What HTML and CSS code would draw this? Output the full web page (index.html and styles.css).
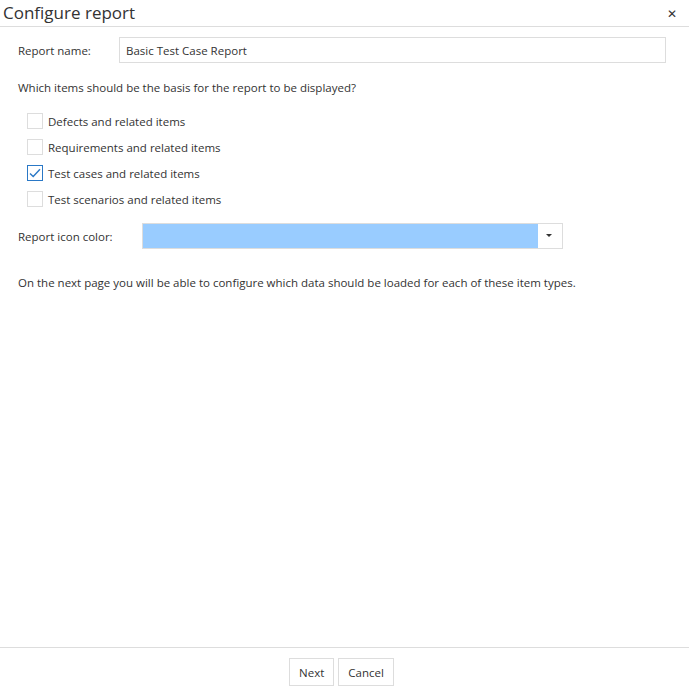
FILE: index.html
```html
<!DOCTYPE html>
<html lang="en">
<head>
    <meta charset="UTF-8">
    <title>Configure report</title>
    <link rel="stylesheet" href="styles.css">
</head>
<body>
    <div class="dialog">
        <div class="header">
            <h1 class="title">Configure report</h1>
            <span class="close">&#10005;</span>
        </div>

        <div class="content">
            <div class="name-row">
                <label class="label">Report name:</label>
                <input type="text" class="text-input" value="Basic Test Case Report">
            </div>

            <p class="question">Which items should be the basis for the report to be displayed?</p>

            <ul class="options">
                <li class="option"><span class="box"></span>Defects and related items</li>
                <li class="option"><span class="box"></span>Requirements and related items</li>
                <li class="option"><span class="box checked">
                    <svg width="12" height="10" viewBox="0 0 12 10"><path d="M1 5.5 L4.2 8.5 L11 1.2" fill="none" stroke="#2a78c6" stroke-width="1.4"/></svg>
                </span>Test cases and related items</li>
                <li class="option"><span class="box"></span>Test scenarios and related items</li>
            </ul>

            <div class="color-row">
                <label class="label">Report icon color:</label>
                <div class="color-select">
                    <span class="swatch"></span>
                    <span class="caret"></span>
                </div>
            </div>

            <p class="hint">On the next page you will be able to configure which data should be loaded for each of these item types.</p>
        </div>

        <div class="footer">
            <button class="btn">Next</button>
            <button class="btn">Cancel</button>
        </div>
    </div>
</body>
</html>
```

FILE: styles.css
```css
body, html {
    margin: 0;
    padding: 0;
    height: 100%;
    font-family: "Open Sans", "Noto Sans", sans-serif;
    font-size: 11.5px;
    color: #333;
    background-color: #fff;
}

.dialog {
    display: flex;
    flex-direction: column;
    height: 100vh;
}

.header {
    display: flex;
    justify-content: space-between;
    align-items: center;
    height: 26px;
    border-bottom: 1px solid #ddd;
    padding: 0 12px 0 3px;
}

.title {
    margin: 0;
    font-size: 17px;
    font-weight: normal;
    color: #333;
    line-height: 26px;
}

.close {
    font-size: 12px;
    color: #333;
}

.content {
    flex: 1;
    padding: 10px 23px 0 18px;
}

.name-row {
    display: flex;
    align-items: center;
}

.label {
    width: 101px;
}

.text-input {
    flex: 1;
    height: 26px;
    box-sizing: border-box;
    border: 1px solid #ddd;
    padding: 0 6px;
    font-family: inherit;
    font-size: 11.5px;
    color: #333;
    outline: none;
}

.question {
    margin: 17px 0 13px;
}

.options {
    list-style: none;
    margin: 0;
    padding: 0 0 0 9px;
}

.option {
    display: flex;
    align-items: center;
    height: 26px;
}

.box {
    width: 16px;
    height: 16px;
    box-sizing: border-box;
    border: 1px solid #ddd;
    margin-right: 5px;
    display: flex;
    align-items: center;
    justify-content: center;
}

.box.checked {
    border-color: #2a78c6;
}

.color-row {
    display: flex;
    align-items: center;
    margin-top: 11px;
}

.color-row .label {
    width: 124px;
}

.color-select {
    display: flex;
    width: 421px;
    height: 26px;
    box-sizing: border-box;
    border: 1px solid #ddd;
}

.swatch {
    flex: 1;
    background-color: #99ccff;
}

.caret {
    width: 24px;
    position: relative;
}

.caret::after {
    content: "";
    position: absolute;
    left: 8px;
    top: 10px;
    border-left: 3px solid transparent;
    border-right: 3px solid transparent;
    border-top: 3px solid #333;
}

.hint {
    margin: 26px 0 0;
}

.footer {
    display: flex;
    justify-content: center;
    gap: 4px;
    border-top: 1px solid #ddd;
    padding: 10px 6px 2px 0;
}

.btn {
    height: 28px;
    padding: 0 9px;
    background-color: #fff;
    border: 1px solid #ddd;
    font-family: inherit;
    font-size: 11.5px;
    color: #333;
}
```
